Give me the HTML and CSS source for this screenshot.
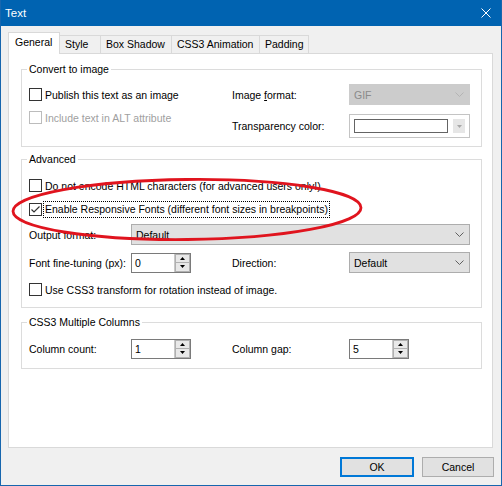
FILE: index.html
```html
<!DOCTYPE html>
<html>
<head>
<meta charset="utf-8">
<title>Text</title>
<link rel="stylesheet" href="styles.css">
</head>
<body>
<div class="window">
  <div class="titlebar">
    <span class="title">Text</span>
    <svg class="close" width="10" height="10" viewBox="0 0 10 10"><path d="M0.5 0.5 L9.5 9.5 M9.5 0.5 L0.5 9.5" stroke="#fff" stroke-width="1" fill="none"/></svg>
  </div>
  <div class="client">
    <div class="tabs">
      <div class="tab sel t-general">General</div>
      <div class="tab t-style">Style</div>
      <div class="tab t-box">Box Shadow</div>
      <div class="tab t-anim">CSS3 Animation</div>
      <div class="tab t-pad">Padding</div>
    </div>
    <div class="panel">
      <div class="group g1">
        <div class="gtitle">Convert to image</div>
        <div class="g1-body">
          <div class="col-left">
            <div class="chk-row"><span class="cb"></span><span>Publish this text as an image</span></div>
            <div class="chk-row disabled"><span class="cb"></span><span>Include text in ALT attribute</span></div>
          </div>
          <div class="col-right">
            <div class="frow">
              <span class="lbl">Image <u>f</u>ormat:</span>
              <div class="combo combo-r dis">
                <span>GIF</span>
                <svg width="9" height="5" viewBox="0 0 9 5"><path d="M0.5 0.5 L4.5 4.5 L8.5 0.5" stroke="#b4b4b4" fill="none"/></svg>
              </div>
            </div>
            <div class="frow frow-tall">
              <span class="lbl">Transparency color:</span>
              <div class="colorbox">
                <span class="swatch"></span>
                <span class="cbtn"><svg width="5" height="3" viewBox="0 0 5 3"><path d="M0 0 L5 0 L2.5 3 Z" fill="#a8a8a8"/></svg></span>
              </div>
            </div>
          </div>
        </div>
      </div>

      <div class="group g2">
        <div class="gtitle">Advanced</div>
        <div class="chk-row r1"><span class="cb"></span><span>Do not encode HTML characters (for advanced users only!)</span></div>
        <div class="chk-row r2"><span class="cb"><svg width="11" height="11" viewBox="0 0 11 11"><path d="M1.5 5.5 L4 8 L9.5 2.5" stroke="#333" stroke-width="1.2" fill="none"/></svg></span><span class="focus">Enable Responsive Fonts (different font sizes in breakpoints)</span></div>
        <div class="frow r3">
          <span class="lbl-l">Output format:</span>
          <div class="combo combo-wide">
            <span>Default</span>
            <svg width="9" height="5" viewBox="0 0 9 5"><path d="M0.5 0.5 L4.5 4.5 L8.5 0.5" stroke="#606060" fill="none"/></svg>
          </div>
        </div>
        <div class="frow r4">
          <span class="lbl-l">Font fine-tuning (px):</span>
          <div class="spin-cell">
            <div class="spin">
              <span class="spin-val">0</span>
              <span class="spin-btns">
                <span class="sb"><svg width="5" height="3" viewBox="0 0 5 3"><path d="M0 3 L2.5 0 L5 3 Z" fill="#000"/></svg></span>
                <span class="sb"><svg width="5" height="3" viewBox="0 0 5 3"><path d="M0 0 L5 0 L2.5 3 Z" fill="#000"/></svg></span>
              </span>
            </div>
          </div>
          <span class="lbl">Direction:</span>
          <div class="combo combo-r">
            <span>Default</span>
            <svg width="9" height="5" viewBox="0 0 9 5"><path d="M0.5 0.5 L4.5 4.5 L8.5 0.5" stroke="#606060" fill="none"/></svg>
          </div>
        </div>
        <div class="chk-row r5"><span class="cb"></span><span>Use CSS3 transform for rotation instead of image.</span></div>
      </div>

      <div class="group g3">
        <div class="gtitle">CSS3 Multiple Columns</div>
        <div class="frow r6">
          <span class="lbl-l">Column count:</span>
          <div class="spin-cell">
            <div class="spin">
              <span class="spin-val">1</span>
              <span class="spin-btns">
                <span class="sb"><svg width="5" height="3" viewBox="0 0 5 3"><path d="M0 3 L2.5 0 L5 3 Z" fill="#000"/></svg></span>
                <span class="sb"><svg width="5" height="3" viewBox="0 0 5 3"><path d="M0 0 L5 0 L2.5 3 Z" fill="#000"/></svg></span>
              </span>
            </div>
          </div>
          <span class="lbl">Column gap:</span>
          <div class="spin">
            <span class="spin-val">5</span>
            <span class="spin-btns">
              <span class="sb"><svg width="5" height="3" viewBox="0 0 5 3"><path d="M0 3 L2.5 0 L5 3 Z" fill="#000"/></svg></span>
              <span class="sb"><svg width="5" height="3" viewBox="0 0 5 3"><path d="M0 0 L5 0 L2.5 3 Z" fill="#000"/></svg></span>
            </span>
          </div>
        </div>
      </div>
    </div>
    <div class="buttons">
      <div class="btn btn-ok">OK</div>
      <div class="btn btn-cancel">Cancel</div>
    </div>
  </div>
</div>
<svg class="annot" width="502" height="486" viewBox="0 0 502 486">
  <ellipse cx="187" cy="209.5" rx="174" ry="30" transform="rotate(-0.6 187 209.5)" fill="none" stroke="#e0141e" stroke-width="2.8"/>
</svg>
</body>
</html>
```

FILE: styles.css
```css
* { box-sizing: border-box; }
html, body { margin: 0; padding: 0; }
body {
  width: 502px;
  height: 486px;
  position: relative;
  overflow: hidden;
  background: #fff;
  font-family: "Liberation Sans", Arial, sans-serif;
  font-size: 10.5px;
  color: #000;
}
.window {
  width: 502px;
  height: 486px;
  border: 1px solid #1766ae;
  border-top: none;
  background: #f0f0f0;
  display: flex;
  flex-direction: column;
}
.titlebar {
  flex: none;
  height: 26px;
  background: #0063b1;
  color: #fff;
  display: flex;
  align-items: center;
  justify-content: space-between;
  padding: 0 10px 0 4px;
}
.title { font-size: 11.5px; }
.close { display: block; }
.client {
  flex: 1;
  display: flex;
  flex-direction: column;
  padding: 6px 8px 0 7px;
}
.tabs {
  display: flex;
  align-items: flex-end;
  height: 21px;
}
.tab {
  height: 18px;
  border: 1px solid #d9d9d9;
  border-left: none;
  border-bottom: none;
  background: #f0f0f0;
  padding-left: 5px;
  line-height: 17px;
  white-space: nowrap;
}
.tab.sel {
  height: 22px;
  margin-bottom: -1px;
  position: relative;
  z-index: 1;
  background: #fff;
  border-left: 1px solid #d9d9d9;
  padding-left: 6px;
  line-height: 19px;
}
.t-general { width: 52px; }
.t-style { width: 41px; }
.t-box { width: 71px; }
.t-anim { width: 88px; }
.t-pad { width: 49px; }

.panel {
  height: 395px;
  flex: none;
  border: 1px solid #d9d9d9;
  background: #fff;
  display: flex;
  flex-direction: column;
}
.group {
  border: 1px solid #dcdcdc;
  margin: 0 10px 0 12px;
  padding-left: 7px;
}
.gtitle {
  width: max-content;
  height: 13px;
  line-height: 13px;
  margin: -7px 0 0 -2px;
  padding: 0 2px;
  background: #fff;
}
.g1 { margin-top: 15px; padding-bottom: 8px; }
.g2 { margin-top: 12px; padding-bottom: 7px; }
.g3 { margin-top: 14px; padding-bottom: 9px; }

.g1-body { display: flex; margin-top: 8px; }
.col-left { width: 203px; display: flex; flex-direction: column; gap: 2px; }
.col-right { display: flex; flex-direction: column; gap: 9px; }

.chk-row {
  height: 21px;
  display: flex;
  align-items: center;
  white-space: nowrap;
}
.cb {
  flex: none;
  width: 13px;
  height: 13px;
  border: 1px solid #333;
  background: #fff;
  margin-right: 3px;
  display: flex;
  align-items: center;
  justify-content: center;
}
.disabled { color: #a0a0a0; }
.disabled .cb { border-color: #bcbcbc; }
.focus {
  display: inline-block;
  line-height: 13px;
  padding: 1px 1px;
  margin-left: -1px;
  outline: 1px dotted #000;
  outline-offset: 0;
}

.frow { display: flex; align-items: center; height: 21px; white-space: nowrap; }
.frow-tall { height: 24px; }
.lbl { width: 117px; flex: none; }
.lbl-l { width: 102px; flex: none; }
.spin-cell { width: 101px; flex: none; }

.combo {
  height: 21px;
  border: 1px solid #adadad;
  background: #e1e1e1;
  display: flex;
  align-items: center;
  justify-content: space-between;
  padding: 0 5px 0 4px;
}
.combo svg { display: block; }
.combo-r { width: 121px; }
.combo-wide { width: 339px; }
.combo.dis { background: #cccccc; border-color: #cccccc; color: #8a8a8a; }

.colorbox {
  width: 121px;
  height: 24px;
  border: 1px solid #c4c4c4;
  background: #fff;
  display: flex;
  align-items: center;
  padding: 0 4px;
  gap: 5px;
}
.swatch {
  width: 94px;
  height: 14px;
  border: 1px solid #646464;
  background: #fff;
}
.cbtn {
  width: 12px;
  height: 14px;
  background: #e6e6e6;
  display: flex;
  align-items: center;
  justify-content: center;
}
.cbtn svg { display: block; }

.r1 { margin-top: 9px; }
.r2 { margin-top: 3px; }
.r3 { margin-top: 4px; }
.r4 { margin-top: 7px; }
.r5 { margin-top: 6px; }
.r6 { margin-top: 9px; }

.spin {
  width: 60px;
  height: 20px;
  border: 1px solid #7a7a7a;
  background: #fff;
  display: flex;
}
.spin-val { flex: 1; padding-left: 3px; line-height: 18px; }
.spin-btns {
  width: 16px;
  display: flex;
  flex-direction: column;
  border-left: 1px solid #c8c8c8;
}
.sb {
  flex: 1;
  background: #e8e8e8;
  border: 1px solid #b0b0b0;
  display: flex;
  align-items: center;
  justify-content: center;
}
.sb + .sb { border-top: none; }
.sb svg { display: block; }

.buttons {
  display: flex;
  justify-content: flex-end;
  gap: 8px;
  margin-top: 9px;
  margin-right: -1px;
}
.btn {
  height: 20px;
  border: 1px solid #adadad;
  background: #e1e1e1;
  display: flex;
  align-items: center;
  justify-content: center;
}
.btn-ok { width: 74px; border: 2px solid #0078d7; }
.btn-cancel { width: 72px; }

.annot {
  position: absolute;
  left: 0;
  top: 0;
  pointer-events: none;
}
```
